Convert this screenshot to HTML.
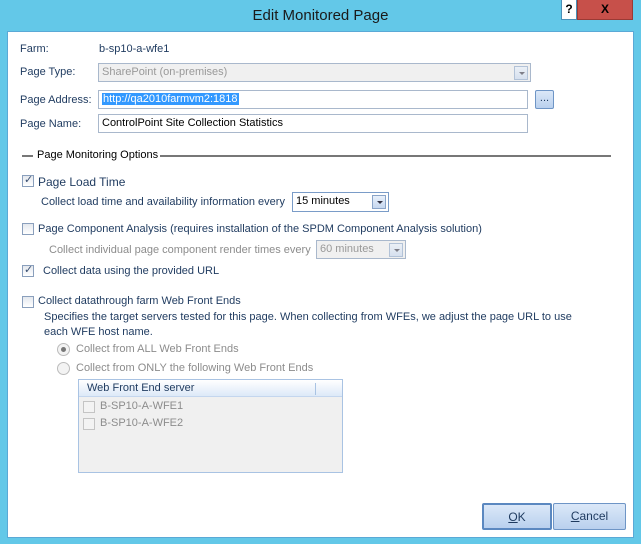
<!DOCTYPE html>
<html><head><style>
*{margin:0;padding:0;box-sizing:border-box}
body{width:641px;height:544px;background:#63c8e8;font-family:"Liberation Sans",Tahoma,sans-serif;font-size:11px;color:#1e3a5f;position:relative;overflow:hidden}
.a{position:absolute;white-space:nowrap}
#title{left:0;top:0;width:641px;text-align:center;font-size:15px;color:#1a1a1a;top:7px}
#main{left:7px;top:31px;width:627px;height:507px;background:#fff;border:1px solid #5aa9d6}
.in{position:absolute;border:1px solid #a9b8cc;background:#fff;height:19px;padding:2px 3px;font-size:11px;color:#000}
.dd{position:absolute;width:14px;height:14px;border:1px solid #8aa4c8;background:linear-gradient(#e8f0fb,#c6d7ef);top:2px;right:2px}
.dd:after{content:"";position:absolute;left:4px;top:5px;border:3px solid transparent;border-top:3px solid #334}
.cb{position:absolute;width:12px;height:12px;border:1px solid #8a9fbc;background:linear-gradient(#e4e8ee,#fff)}
.chk:after{content:"✓";position:absolute;left:1px;top:-3px;font-size:11px;color:#3a4f70}
.rd{position:absolute;width:13px;height:13px;border:1px solid #bbb;border-radius:50%;background:#f3f3f3}
.g{color:#8c8c8c}
.btn{position:absolute;border:1px solid #6e95c6;border-radius:2px;background:linear-gradient(#dbe8f8,#b9d0ee);text-align:center;font-size:12px;color:#1e3a5f;line-height:24px}
</style></head><body>
<div class="a" id="title">Edit Monitored Page</div>
<div class="a" style="left:561px;top:0;width:16px;height:20px;background:#fff;border:1px solid #4a90b8;border-top:none;font-weight:bold;font-size:12px;text-align:center;line-height:19px;color:#000">?</div>
<div class="a" style="left:577px;top:0;width:56px;height:20px;background:#c7504a;border:1px solid #9a3a35;border-top:none;font-weight:bold;font-size:12px;text-align:center;line-height:19px;color:#000">X</div>
<div class="a" id="main"></div>

<div class="a" style="left:20px;top:43px">Farm:</div>
<div class="a" style="left:99px;top:43px">b-sp10-a-wfe1</div>
<div class="a" style="left:20px;top:66px">Page Type:</div>
<div class="in" style="left:98px;top:63px;width:433px;background:#f0f0f0;color:#999">SharePoint (on-premises)<div class="dd" style="opacity:.6"></div></div>
<div class="a" style="left:20px;top:94px">Page Address:</div>
<div class="in" style="left:98px;top:90px;width:430px"><span style="background:#3399ff;color:#fff;padding:0 1px">http://qa2010farmvm2:1818</span></div>
<div class="btn" style="left:535px;top:90px;width:19px;height:19px;line-height:14px;font-size:11px">...</div>
<div class="a" style="left:20px;top:118px">Page Name:</div>
<div class="in" style="left:98px;top:114px;width:430px">ControlPoint Site Collection Statistics</div>

<div class="a" style="left:22px;top:155px;width:11px;height:2px;background:#777"></div>
<div class="a" style="left:37px;top:149px;color:#000">Page Monitoring Options</div>
<div class="a" style="left:160px;top:155px;width:451px;height:2px;background:#777"></div>

<div class="cb chk" style="left:22px;top:175px"></div>
<div class="a" style="left:38px;top:175px;font-size:12px">Page Load Time</div>
<div class="a" style="left:41px;top:196px">Collect load time and availability information every</div>
<div class="in" style="left:292px;top:192px;width:97px;height:20px;border-color:#7a9cc8">15 minutes<div class="dd"></div></div>

<div class="cb" style="left:22px;top:223px"></div>
<div class="a" style="left:38px;top:223px">Page Component Analysis (requires installation of the SPDM Component Analysis solution)</div>
<div class="a g" style="left:49px;top:244px">Collect individual page component render times every</div>
<div class="in" style="left:316px;top:240px;width:90px;background:#f0f0f0;color:#999">60 minutes<div class="dd" style="opacity:.6"></div></div>

<div class="cb chk" style="left:22px;top:265px"></div>
<div class="a" style="left:43px;top:265px">Collect data using the provided URL</div>

<div class="cb" style="left:22px;top:296px"></div>
<div class="a" style="left:38px;top:295px">Collect datathrough farm Web Front Ends</div>
<div class="a" style="left:44px;top:311px">Specifies the target servers tested for this page. When collecting from WFEs, we adjust the page URL to use</div>
<div class="a" style="left:44px;top:326px">each WFE host name.</div>

<div class="rd" style="left:57px;top:343px"><div style="position:absolute;left:3px;top:3px;width:5px;height:5px;border-radius:50%;background:#777"></div></div>
<div class="a g" style="left:76px;top:343px">Collect from ALL Web Front Ends</div>
<div class="rd" style="left:57px;top:362px"></div>
<div class="a g" style="left:76px;top:362px">Collect from ONLY the following Web Front Ends</div>

<div class="a" style="left:78px;top:379px;width:265px;height:94px;border:1px solid #a9c3e3;background:#f0f0f0">
<div style="height:17px;background:linear-gradient(#fff,#dde9f8);border-bottom:1px solid #c4d6ee;padding:2px 8px;color:#1e3a5f;position:relative">Web Front End server<div style="position:absolute;left:236px;top:3px;width:1px;height:12px;background:#a9c3e3"></div></div>
<div class="cb" style="left:4px;top:21px;border-color:#c4c4c4;background:#f3f3f3"></div>
<div class="a g" style="left:21px;top:20px">B-SP10-A-WFE1</div>
<div class="cb" style="left:4px;top:38px;border-color:#c4c4c4;background:#f3f3f3"></div>
<div class="a g" style="left:21px;top:37px">B-SP10-A-WFE2</div>
</div>

<div class="btn" style="left:482px;top:503px;width:70px;height:27px;border:2px solid #5b88c0"><u>O</u>K</div>
<div class="btn" style="left:553px;top:503px;width:73px;height:27px"><u>C</u>ancel</div>
</body></html>
